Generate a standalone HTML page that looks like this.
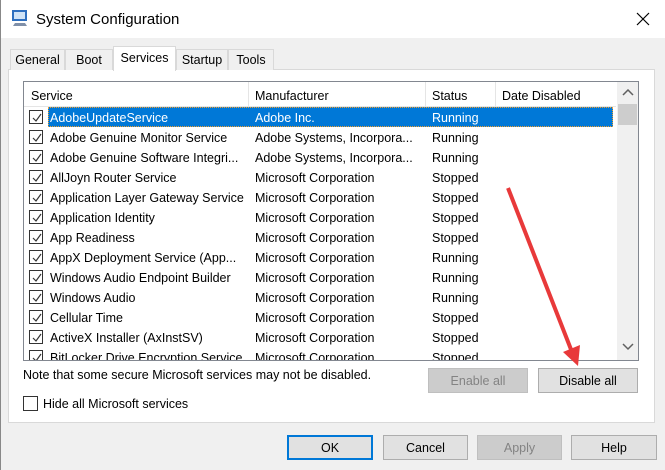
<!DOCTYPE html>
<html><head><meta charset="utf-8"><style>
*{margin:0;padding:0;box-sizing:border-box}
body{width:665px;height:470px;background:#f0f0f0;font-family:"Liberation Sans",sans-serif;font-size:12.5px;color:#000;position:relative;overflow:hidden}
.a{position:absolute;white-space:nowrap}
.tab{position:absolute;top:49px;height:21px;border:1px solid #d9d9d9;border-bottom:none;background:#f0f0f0;text-align:center;line-height:21px;font-size:12.5px}
.btn{position:absolute;height:25px;border:1px solid #adadad;background:#e1e1e1;text-align:center;line-height:24px}
.dis{border-color:#bfbfbf;background:#cccccc;color:#838383}
.cb{position:absolute;left:29px;width:14px;height:14px;border:1px solid #333;background:#fff}
.cb svg{position:absolute;left:1px;top:1px}
</style></head><body>
<div class="a" style="left:0;top:0;width:665px;height:38px;background:#fff"></div>
<div class="a" style="left:0;top:0;width:1px;height:470px;background:#888"></div>
<svg class="a" style="left:10px;top:8px" width="20" height="20"><rect x="2" y="2" width="15" height="11" fill="#2d6fc0"/><rect x="4" y="4" width="11" height="7" fill="#cfe3f7"/><path d="M5 15h10l2 3H3z" fill="#7f8fa8"/></svg>
<div class="a" style="left:36px;top:11px;font-size:15px">System Configuration</div>
<svg class="a" style="left:636px;top:12px" width="14" height="14"><path d="M1 1L13 13M13 1L1 13" stroke="#000" stroke-width="1.2"/></svg>

<div class="a" style="left:8px;top:69px;width:647px;height:354px;background:#fff;border:1px solid #d9d9d9"></div>
<div class="tab" style="left:10px;width:55px">General</div>
<div class="tab" style="left:65px;width:48px">Boot</div>
<div class="tab" style="left:176px;width:52px">Startup</div>
<div class="tab" style="left:228px;width:46px">Tools</div>
<div class="tab" style="left:113px;top:46px;height:25px;width:63px;background:#fff;line-height:23px">Services</div>

<div class="a" style="left:23px;top:81px;width:616px;height:280px;border:1px solid #828790;background:#fff;overflow:hidden">
 <div class="a" style="left:0;top:0;width:592px;height:25px;border-bottom:1px solid #e5e5e5"></div>
 <div class="a" style="left:224px;top:0;width:1px;height:25px;background:#e5e5e5"></div>
 <div class="a" style="left:401px;top:0;width:1px;height:25px;background:#e5e5e5"></div>
 <div class="a" style="left:471px;top:0;width:1px;height:25px;background:#e5e5e5"></div>
 <div class="a" style="left:7px;top:7px">Service</div>
 <div class="a" style="left:231px;top:7px">Manufacturer</div>
 <div class="a" style="left:408px;top:7px">Status</div>
 <div class="a" style="left:478px;top:7px">Date Disabled</div>
 <div class="a" style="left:593px;top:0;width:21px;height:278px;background:#f0f0f0"></div>
 <div class="a" style="left:594px;top:22px;width:19px;height:21px;background:#cdcdcd"></div>
 <svg class="a" style="left:598px;top:7px" width="12" height="8"><path d="M1 6L6 1L11 6" stroke="#606060" stroke-width="1.5" fill="none"/></svg>
 <svg class="a" style="left:598px;top:261px" width="12" height="8"><path d="M1 1L6 6L11 1" stroke="#606060" stroke-width="1.5" fill="none"/></svg>
</div>
<div class="a" style="left:48px;top:107px;width:565px;height:20px;background:#0078d7;outline:1px dotted #f0a030;outline-offset:-1px"></div>
<div id="rows"></div>
<script>
var d=[["AdobeUpdateService","Adobe Inc.","Running"],["Adobe Genuine Monitor Service","Adobe Systems, Incorpora...","Running"],["Adobe Genuine Software Integri...","Adobe Systems, Incorpora...","Running"],["AllJoyn Router Service","Microsoft Corporation","Stopped"],["Application Layer Gateway Service","Microsoft Corporation","Stopped"],["Application Identity","Microsoft Corporation","Stopped"],["App Readiness","Microsoft Corporation","Stopped"],["AppX Deployment Service (App...","Microsoft Corporation","Running"],["Windows Audio Endpoint Builder","Microsoft Corporation","Running"],["Windows Audio","Microsoft Corporation","Running"],["Cellular Time","Microsoft Corporation","Stopped"],["ActiveX Installer (AxInstSV)","Microsoft Corporation","Stopped"],["BitLocker Drive Encryption Service","Microsoft Corporation","Stopped"]];
var h="";d.forEach(function(r,i){var y=107+i*20;var c=i==0?"color:#fff;":"";
h+='<div class="cb" style="top:'+(y+3)+'px"><svg width="12" height="12"><path d="M2 6L5 9L10 2" stroke="#333" stroke-width="1.2" fill="none"/></svg></div>';
h+='<div class="a" style="'+c+'left:50px;top:'+(y+4)+'px">'+r[0]+'</div><div class="a" style="'+c+'left:255px;top:'+(y+4)+'px">'+r[1]+'</div><div class="a" style="'+c+'left:432px;top:'+(y+4)+'px">'+r[2]+'</div>';});
document.getElementById("rows").innerHTML='<div class="a" style="left:24px;top:82px;width:592px;height:278px;overflow:hidden"><div class="a" style="left:-24px;top:-82px;width:665px;height:470px">'+h+'</div></div>';
</script>
<div class="a" style="left:23px;top:368px">Note that some secure Microsoft services may not be disabled.</div>
<div class="btn dis" style="left:428px;top:368px;width:100px">Enable all</div>
<div class="btn" style="left:538px;top:368px;width:100px">Disable all</div>
<div class="a" style="left:23px;top:396px;width:15px;height:15px;border:1px solid #333;background:#fff"></div>
<div class="a" style="left:43px;top:397px">Hide all Microsoft services</div>
<div class="btn" style="left:287px;top:435px;width:86px;border:2px solid #0078d7;line-height:22px">OK</div>
<div class="btn" style="left:383px;top:435px;width:85px">Cancel</div>
<div class="btn dis" style="left:477px;top:435px;width:85px">Apply</div>
<div class="btn" style="left:571px;top:435px;width:86px">Help</div>
<svg class="a" style="left:0;top:0" width="665" height="470"><path d="M508 188L572 352" stroke="#e8393a" stroke-width="4"/><path d="M563 352L580 345L578 366Z" fill="#e8393a"/></svg>
</body></html>
